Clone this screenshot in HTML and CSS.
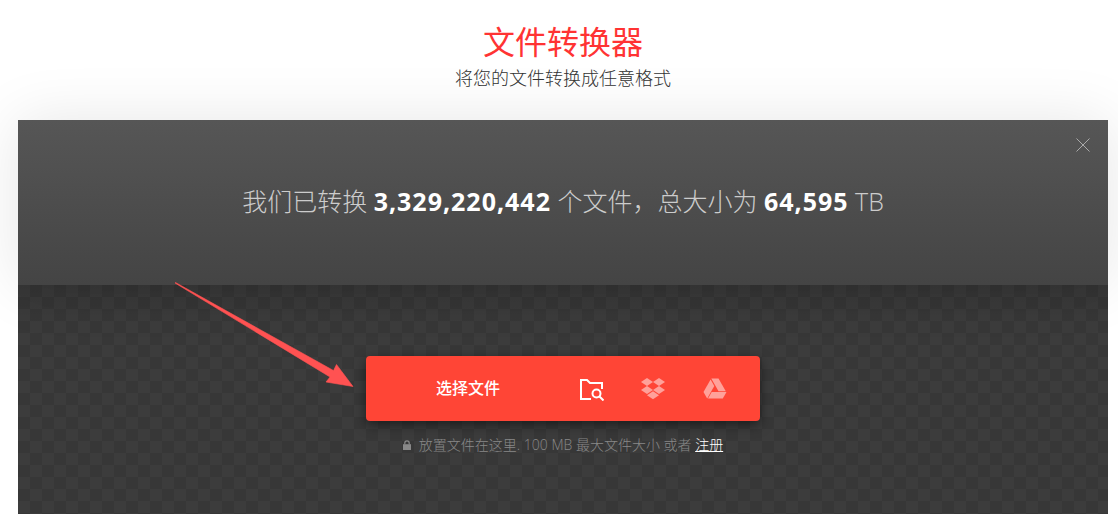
FILE: index.html
```html
<!DOCTYPE html>
<html lang="zh-CN">
<head>
  <meta charset="UTF-8" />
  <title>文件转换器</title>
  <meta name="viewport" content="width=device-width, initial-scale=1.0" />
  <link rel="stylesheet" href="styles.css">
</head>
<body>

<header class="intro">
  <h1>文件转换器</h1>
  <p>将您的文件转换成任意格式</p>
</header>

<main class="converter">

  <!-- Stats -->
  <section class="stats">
    <p>我们已转换 <strong>3,329,220,442</strong> 个文件，总大小为 <strong>64,595</strong> TB</p>
    <button class="close" type="button" aria-label="关闭">
      <svg width="14" height="14" viewBox="0 0 14 14"><path d="M.5.5l13 13M13.5.5l-13 13" /></svg>
    </button>
  </section>

  <!-- Upload -->
  <section class="upload">
    <div class="picker">
      <button class="choose" type="button">选择文件</button>
      <button class="source active" type="button" aria-label="浏览文件夹">
        <svg width="26" height="24" viewBox="0 0 26 24" fill="none" stroke="currentColor" stroke-width="2">
          <path d="M13 22H3V3h6l3 3h12v6" />
          <circle cx="18.500" cy="16.500" r="4" />
          <path d="M21.500 19.500l4 4" />
        </svg>
      </button>
      <button class="source" type="button" aria-label="Dropbox">
        <svg width="26" height="22" viewBox="0 0 26 22" fill="currentColor">
          <path d="M7 0l6 4-6 4-6-4zM19 0l6 4-6 4-6-4zM7 8l6 4-6 4-6-4zM19 8l6 4-6 4-6-4zM7 17.200l6-4 6 4-6 4z" />
        </svg>
      </button>
      <button class="source" type="button" aria-label="Google Drive">
        <svg width="24" height="22" viewBox="0 0 24 22" fill="currentColor">
          <path d="M8.300.500h7.200l7.300 12.700h-7.300z" />
          <path d="M7.600 1.500l3.700 6.400-7.100 12.500L.500 14z" />
          <path d="M8.700 14.100h14.800L19.800 20.500H5z" />
        </svg>
      </button>
    </div>
    <p class="hint">
      <svg class="lock" width="8" height="10" viewBox="0 0 8 10"><path d="M0 4.200h8V10H0z" fill="currentColor" /><path d="M1.800 4.500V3a2.200 2.200 0 0 1 4.400 0v1.500" fill="none" stroke="currentColor" stroke-width="1.200" /></svg>
      <span>放置文件在这里. 100 MB 最大文件大小 或者 <a href="#signup">注册</a></span>
    </p>
  </section>

  <!-- Pointer to the file button -->
  <svg class="arrow" width="180" height="106" viewBox="0 0 180 106">
    <path d="M0 0l.5-.5L158.500 87.500 161.500 81.500 178 103.500 151 99 155 94z" fill="#ff5252" stroke="#ff5252" stroke-width=".6" />
  </svg>

</main>

</body>
</html>
```
FILE: styles.css
```css
* { box-sizing: border-box; }

body {
  margin: 0;
  padding: 22px 10px 12px 18px;
  background: #fff;
  color: #333;
  font-family: "Open Sans", "Noto Sans CJK SC", sans-serif;
  font-weight: 300;
}

h1, p { margin: 0; }

button {
  display: flex;
  align-items: center;
  justify-content: center;
  padding: 0;
  border: none;
  background: none;
  color: inherit;
  font: inherit;
  cursor: pointer;
}

.intro { text-align: center; }

.intro h1 {
  color: #ff3333;
  font-size: 32px;
  font-weight: 400;
  line-height: 40px;
}

.intro p {
  padding: 2px 0 28px;
  font-size: 18px;
  line-height: 28px;
}

.converter { position: relative; }

.stats {
  position: relative;
  padding: 63px 40px 65px;
  background: linear-gradient(#565656, #444);
  box-shadow: 0 0 60px rgba(0,0,0,0.1);
  color: #ccc;
  font-size: 25px;
  line-height: 37px;
  text-align: center;
}

.stats strong {
  color: #fff;
  font-weight: 700;
  letter-spacing: 1px;
}

.close {
  position: absolute;
  top: 18px;
  right: 18px;
}

.close svg { stroke: #aaa; }

.upload {
  display: flex;
  flex-direction: column;
  align-items: center;
  padding: 71px 20px 59px;
  background:
    linear-gradient(rgba(0,0,0,0.1), transparent 40px),
    repeating-conic-gradient(#373737 0 25%, #3c3c3c 0 50%) 0 0 / 24px 24px;
}

.picker {
  display: flex;
  width: 394px;
  max-width: 100%;
  height: 65px;
  padding-right: 14px;
  border-radius: 4px;
  background: #ff4536;
  box-shadow: 0 4px 12px rgba(0,0,0,0.5);
  color: #fff;
}

.choose {
  flex: 1;
  padding: 0 0 3px 10px;
  font-size: 16px;
  font-weight: 500;
}

.source {
  width: 62px;
  color: #ffa19a;
}

.source.active { color: #fff; }

.hint {
  display: flex;
  align-items: center;
  gap: 8px;
  padding-top: 13px;
  color: #888;
  font-size: 14px;
  line-height: 21px;
}

.hint a { color: #fff; }

.arrow {
  position: absolute;
  top: 163px;
  left: 157px;
  overflow: visible;
  pointer-events: none;
}
```
